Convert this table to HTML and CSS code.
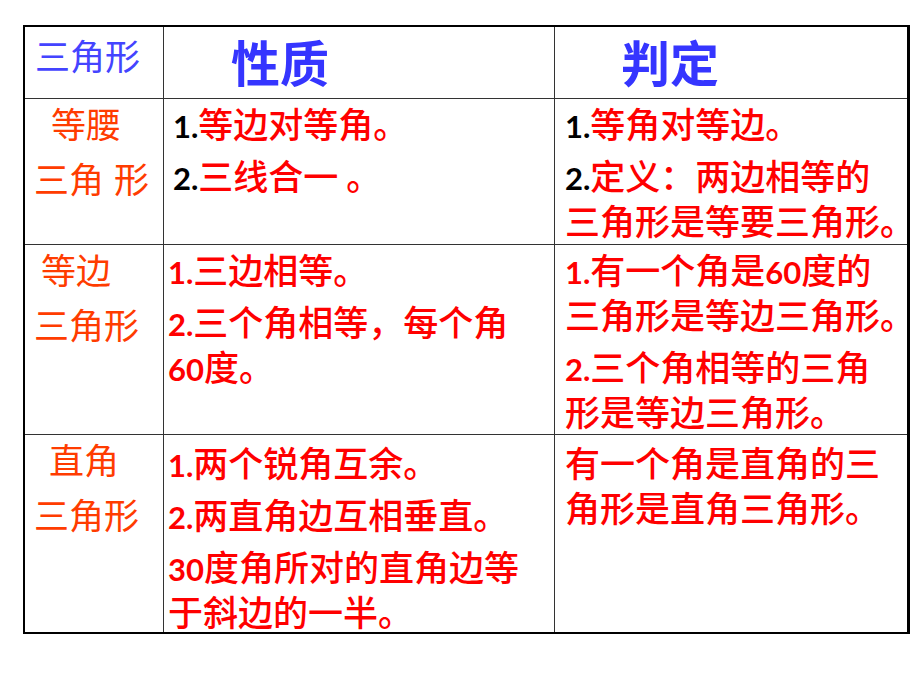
FILE: index.html
```html
<!DOCTYPE html>
<html lang="zh-CN">
<head>
<meta charset="utf-8">
<title>三角形 性质 判定</title>
<link rel="stylesheet" href="styles.css">
</head>
<body>
<div class="sheet">
  <div class="hd hd-name">三角形</div>
  <div class="hd hd-title">性质</div>
  <div class="hd hd-title hd-title3">判定</div>

  <div class="kind">
    <div class="k ind-a">等腰</div>
    <div class="k">三角<span class="gap"></span>形</div>
  </div>
  <div class="body col2 col2-first">
    <p><b class="num dark">1.</b>等边对等角。</p>
    <p><b class="num dark">2.</b>三线合一 。</p>
  </div>
  <div class="body col3">
    <p><b class="num dark">1.</b>等角对等边。</p>
    <p><b class="num dark">2.</b>定义：两边相等的<br>三角形是等要三角形。</p>
  </div>

  <div class="kind">
    <div class="k ind-b">等边</div>
    <div class="k">三角形</div>
  </div>
  <div class="body col2">
    <p><b class="num">1.</b>三边相等。</p>
    <p><b class="num">2.</b>三个角相等，每个角<br><b class="num">60</b>度。</p>
  </div>
  <div class="body col3">
    <p><b class="num">1.</b>有一个角是<b class="num">60</b>度的<br>三角形是等边三角形。</p>
    <p><b class="num">2.</b>三个角相等的三角<br>形是等边三角形。</p>
  </div>

  <div class="kind">
    <div class="k ind-c">直角</div>
    <div class="k">三角形</div>
  </div>
  <div class="body col2 col2-last">
    <p><b class="num">1.</b>两个锐角互余。</p>
    <p><b class="num">2.</b>两直角边互相垂直。</p>
    <p><b class="num">30</b>度角所对的直角边等<br>于斜边的一半。</p>
  </div>
  <div class="body col3 col3-last">
    <p>有一个角是直角的三<br>角形是直角三角形。</p>
  </div>
</div>
</body>
</html>
```

FILE: styles.css
```css
html, body {
  margin: 0;
  padding: 0;
  background: #ffffff;
}

body {
  font-family: "Noto Sans CJK SC", "Noto Sans", sans-serif;
}

.sheet {
  display: grid;
  grid-template-columns: 138px 390px 352px;
  grid-template-rows: 71px 145px 189px 197px;
  gap: 1px;
  background: #333333;
  border-style: solid;
  border-color: #000000;
  border-width: 2px 3px 2px 2px;
  width: max-content;
  margin: 25px 0 0 23px;
}

.sheet > div {
  background: #ffffff;
}

/* header row */
.hd {
  display: flex;
  color: #3535ff;
}

.hd-name {
  align-items: flex-start;
  font-size: 35px;
  line-height: 40px;
  padding: 8px 0 0 10px;
  font-weight: 400;
  color: #4444ff;
}

.hd-title {
  align-items: center;
  font-size: 49px;
  line-height: 56px;
  font-weight: 700;
  padding: 0 0 4px 67px;
}

.hd-title3 {
  padding-left: 66px;
}

/* first column: triangle kinds */
.kind {
  display: flex;
  flex-direction: column;
  gap: 7px;
  padding: 0 0 0 9px;
  color: #ff3c00;
  font-size: 35px;
}

.k {
  height: 48px;
  line-height: 48px;
  white-space: nowrap;
}

.gap {
  display: inline-block;
  width: 10px;
}

.ind-a { padding-left: 17px; }
.ind-b { padding-left: 7px; }
.ind-c { padding-left: 15px; }

/* property and criteria columns */
.body {
  color: #ff0000;
  font-size: 35px;
  font-weight: 500;
  padding-top: 1px;
}

.col2 { padding-left: 4px; }
.col2-first { padding-left: 9px; }
.col2-last { padding-top: 4px; }
.col3 { padding-left: 10px; }
.col3-last { padding-top: 4px; }

.body p {
  margin: 0;
  line-height: 45px;
  white-space: nowrap;
}

.body p + p {
  margin-top: 7px;
}

.num {
  font-family: Lato, "Open Sans", sans-serif;
  font-weight: 700;
  font-size: 31px;
  line-height: 1;
  color: #ff0000;
}

.num.dark {
  color: #000000;
}
```
